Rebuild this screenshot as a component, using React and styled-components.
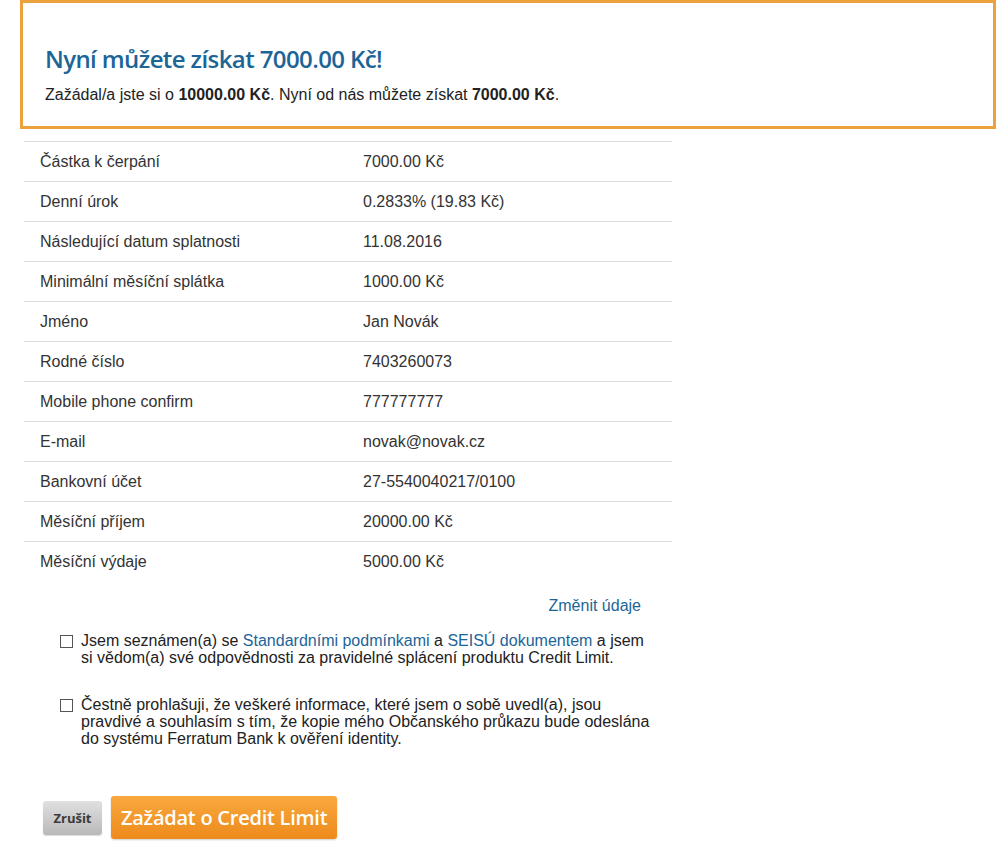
import React from "react";
import styled, { createGlobalStyle } from "styled-components";

const GlobalStyle = createGlobalStyle`
  body {
    margin: 0;
    background: #fff;
    font-family: "Liberation Sans", Arial, sans-serif;
    color: #333;
  }
`;

const Page = styled.div`
  width: 996px;
  padding-bottom: 7px;
`;

const Notice = styled.div`
  margin-left: 20px;
  height: 129px;
  box-sizing: border-box;
  border: 3px solid #eba13d;
  padding: 41px 22px 0;
`;

const NoticeTitle = styled.h2`
  margin: 0 0 12px;
  font-family: "Open Sans", sans-serif;
  font-weight: 600;
  font-size: 24px;
  line-height: 30px;
  letter-spacing: -0.6px;
  color: #1d6597;
`;

const NoticeText = styled.p`
  margin: 0;
  font-size: 16px;
  line-height: 18px;
  color: #222;
  b {
    font-weight: bold;
  }
`;

const Summary = styled.div`
  width: 648px;
  margin: 12px 0 0 24px;
`;

const Row = styled.div`
  display: grid;
  grid-template-columns: 323px 1fr;
  height: 40px;
  align-items: center;
  border-top: 1px solid #dcdfe0;
  box-sizing: border-box;
  padding-left: 16px;
  font-size: 16px;
  color: #333;
`;

const EditLink = styled.a`
  display: block;
  text-align: right;
  padding-right: 31px;
  margin-top: 16px;
  font-size: 16px;
  color: #1d6597;
  text-decoration: none;
`;

const Consent = styled.label`
  display: flex;
  gap: 8px;
  margin-left: 60px;
  width: 594px;
  font-size: 16px;
  line-height: 17px;
  color: #222;
  margin-top: ${(p) => p.top}px;
`;

const Box = styled.span`
  flex: none;
  width: 11px;
  height: 11px;
  border: 1px solid #555;
  margin-top: 3px;
`;

const TextLink = styled.a`
  color: #1d6597;
  text-decoration: none;
`;

const Actions = styled.div`
  display: flex;
  align-items: center;
  gap: 9px;
  margin: 49px 0 0 43px;
`;

const CancelButton = styled.button`
  width: 59px;
  height: 34px;
  border: none;
  border-radius: 3px;
  background: linear-gradient(#e0e0e0, #b9b9b9);
  box-shadow: 0 1px 1px rgba(0, 0, 0, 0.15);
  font-family: "Open Sans", sans-serif;
  font-weight: 700;
  font-size: 13px;
  color: #3a3a3a;
  padding: 0;
`;

const SubmitButton = styled.button`
  height: 43px;
  padding: 0 10px;
  border: none;
  border-radius: 3px;
  background: linear-gradient(#f8a93e, #ee8a1c);
  box-shadow: 0 1px 2px rgba(0, 0, 0, 0.2);
  font-family: "Open Sans", sans-serif;
  font-weight: 600;
  font-size: 20px;
  letter-spacing: -0.25px;
  color: #fff;
`;

const rows = [
  ["Částka k čerpání", "7000.00 Kč"],
  ["Denní úrok", "0.2833% (19.83 Kč)"],
  ["Následující datum splatnosti", "11.08.2016"],
  ["Minimální měsíční splátka", "1000.00 Kč"],
  ["Jméno", "Jan Novák"],
  ["Rodné číslo", "7403260073"],
  ["Mobile phone confirm", "777777777"],
  ["E-mail", "novak@novak.cz"],
  ["Bankovní účet", "27-5540040217/0100"],
  ["Měsíční příjem", "20000.00 Kč"],
  ["Měsíční výdaje", "5000.00 Kč"],
];

export default function App() {
  return (
    <Page>
      <GlobalStyle />
      <Notice>
        <NoticeTitle>Nyní můžete získat 7000.00 Kč!</NoticeTitle>
        <NoticeText>
          Zažádal/a jste si o <b>10000.00 Kč</b>. Nyní od nás můžete získat{" "}
          <b>7000.00 Kč</b>.
        </NoticeText>
      </Notice>
      <Summary>
        {rows.map(([label, value]) => (
          <Row key={label}>
            <span>{label}</span>
            <span>{value}</span>
          </Row>
        ))}
        <EditLink href="#">Změnit údaje</EditLink>
      </Summary>
      <Consent top={17}>
        <Box />
        <span>
          Jsem seznámen(a) se <TextLink href="#">Standardními podmínkami</TextLink> a{" "}
          <TextLink href="#">SEISÚ dokumentem</TextLink> a jsem si vědom(a) své
          odpovědnosti za pravidelné splácení produktu Credit Limit.
        </span>
      </Consent>
      <Consent top={30}>
        <Box />
        <span>
          Čestně prohlašuji, že veškeré informace, které jsem o sobě uvedl(a), jsou
          pravdivé a souhlasím s tím, že kopie mého Občanského průkazu bude odeslána
          do systému Ferratum Bank k ověření identity.
        </span>
      </Consent>
      <Actions>
        <CancelButton>Zrušit</CancelButton>
        <SubmitButton>Zažádat o Credit Limit</SubmitButton>
      </Actions>
    </Page>
  );
}
